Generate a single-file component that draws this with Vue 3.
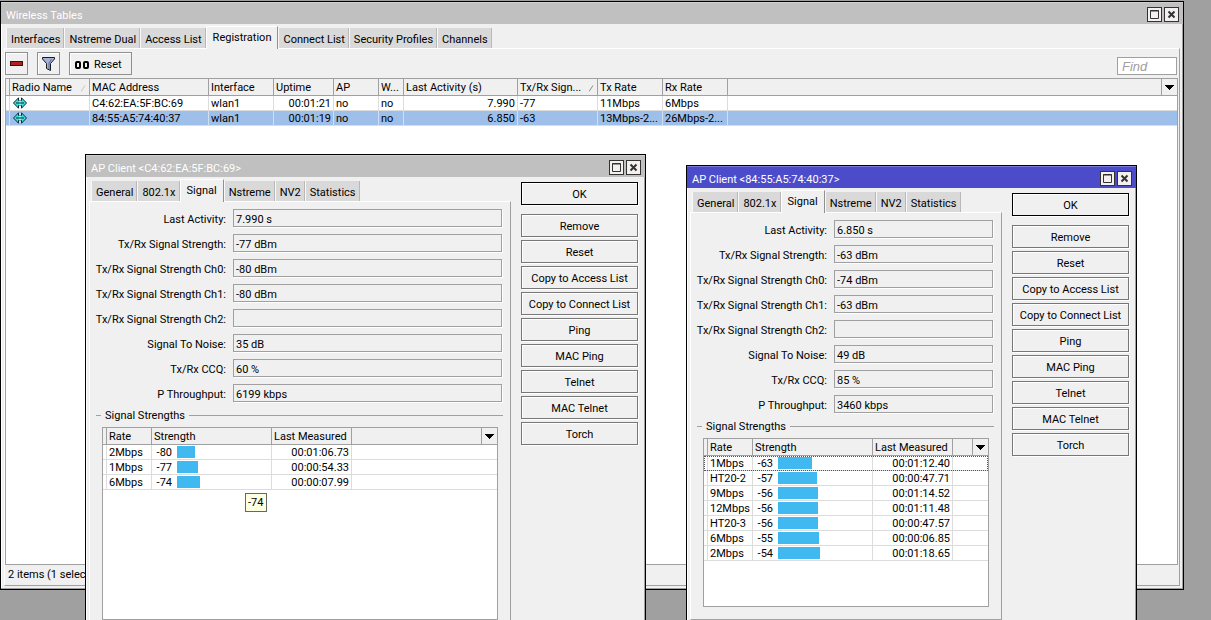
<script setup>
const mainTabs = ['Interfaces', 'Nstreme Dual', 'Access List', 'Registration', 'Connect List', 'Security Profiles', 'Channels']
const clientTabs = ['General', '802.1x', 'Signal', 'Nstreme', 'NV2', 'Statistics']
const actions = ['Remove', 'Reset', 'Copy to Access List', 'Copy to Connect List', 'Ping', 'MAC Ping', 'Telnet', 'MAC Telnet', 'Torch']

const registrations = [
  { mac: 'C4:62:EA:5F:BC:69', iface: 'wlan1', uptime: '00:01:21', ap: 'no', wds: 'no', activity: '7.990', signal: '-77', tx: '11Mbps', rx: '6Mbps', selected: false },
  { mac: '84:55:A5:74:40:37', iface: 'wlan1', uptime: '00:01:19', ap: 'no', wds: 'no', activity: '6.850', signal: '-63', tx: '13Mbps-2...', rx: '26Mbps-2...', selected: true },
]

const fieldNames = [
  'Last Activity:', 'Tx/Rx Signal Strength:', 'Tx/Rx Signal Strength Ch0:', 'Tx/Rx Signal Strength Ch1:',
  'Tx/Rx Signal Strength Ch2:', 'Signal To Noise:', 'Tx/Rx CCQ:', 'P Throughput:',
]

const clients = [
  {
    id: 'first',
    mac: 'C4:62:EA:5F:BC:69',
    active: false,
    tip: '-74',
    values: ['7.990 s', '-77 dBm', '-80 dBm', '-80 dBm', '', '35 dB', '60 %', '6199 kbps'],
    rates: [
      ['2Mbps', -80, '00:01:06.73'],
      ['1Mbps', -77, '00:00:54.33'],
      ['6Mbps', -74, '00:00:07.99'],
    ],
  },
  {
    id: 'second',
    mac: '84:55:A5:74:40:37',
    active: true,
    tip: '',
    values: ['6.850 s', '-63 dBm', '-74 dBm', '-63 dBm', '', '49 dB', '85 %', '3460 kbps'],
    rates: [
      ['1Mbps', -63, '00:01:12.40'],
      ['HT20-2', -57, '00:00:47.71'],
      ['9Mbps', -56, '00:01:14.52'],
      ['12Mbps', -56, '00:01:11.48'],
      ['HT20-3', -56, '00:00:47.57'],
      ['6Mbps', -55, '00:00:06.85'],
      ['2Mbps', -54, '00:01:18.65'],
    ],
  },
]

const barWidth = (dbm) => Math.floor((dbm + 100) * 0.92) + 'px'
</script>

<template>
  <main class="desktop">
    <section class="window main-window">
      <header class="title">
        <span class="title-text">Wireless Tables</span>
        <button class="win-btn" aria-label="Maximize"><svg width="13" height="13" viewBox="0 0 13 13"><path d="M2.5 2.5h8v8h-8z M2 3h9" fill="none" stroke="#333" /></svg></button>
        <button class="win-btn" aria-label="Close"><svg width="13" height="13" viewBox="0 0 13 13"><path d="M3.500 3.500l6 6M9.500 3.500l-6 6" fill="none" stroke="#333" stroke-width="2" /></svg></button>
      </header>
      <nav class="tabs">
        <button v-for="t in mainTabs" :key="t" class="tab" :class="{ current: t === 'Registration' }">{{ t }}</button>
      </nav>
      <div class="panel main-panel">
        <div class="toolbar">
          <button class="tool square" aria-label="Remove"><svg width="13" height="5" viewBox="0 0 13 5" shape-rendering="crispEdges"><path d="M0 0h13v5h-13z" fill="#3a1010" /><path d="M1 1h11v3h-11z" fill="#b02020" /></svg></button>
          <button class="tool square" aria-label="Filter"><svg width="13" height="14" viewBox="0 0 13 14"><path d="M.5 .5h12v1.500l-4 4.500v7l-4-2v-5l-4-4.500z" fill="#a9b2d8" stroke="#1a1a22" /><path d="M9.500 2l-2.500 4v6" fill="none" stroke="#5b668f" /></svg></button>
          <button class="tool reset"><svg width="14" height="8" viewBox="0 0 14 8"><path d="M2 1h2q1 0 1 1v4q0 1-1 1h-2q-1 0-1-1v-4q0-1 1-1zM10 1h2q1 0 1 1v4q0 1-1 1h-2q-1 0-1-1v-4q0-1 1-1z" fill="none" stroke="#000" stroke-width="2" /></svg>Reset</button>
          <input class="find" type="text" placeholder="Find" aria-label="Find" />
        </div>
        <div class="list main-list">
          <table>
            <colgroup>
              <col class="c-edge" /><col class="c80" /><col class="c119" /><col class="c65" /><col class="c60" /><col class="c45" /><col class="c25" />
              <col class="c114" /><col class="c80" /><col class="c65" /><col class="c65" /><col /><col class="c-menu" />
            </colgroup>
            <thead>
              <tr>
                <th></th>
                <th><span class="sortable">Radio Name<svg class="faint" width="6" height="7" viewBox="0 0 6 7"><path d="M0 6.500l4-6" fill="none" stroke="currentColor" /></svg></span></th>
                <th>MAC Address</th><th>Interface</th><th>Uptime</th><th>AP</th><th>W...</th><th>Last Activity (s)</th>
                <th><span class="sortable">Tx/Rx Sign...<svg width="6" height="7" viewBox="0 0 6 7"><path d="M0 6.500l4-6" fill="none" stroke="currentColor" /></svg></span></th>
                <th>Tx Rate</th><th>Rx Rate</th><th></th>
                <th class="menu"><button aria-label="Columns"><svg width="9" height="5" viewBox="0 0 9 5" shape-rendering="crispEdges"><path d="M0 0h9l-4.500 5z" /></svg></button></th>
              </tr>
            </thead>
            <tbody>
              <tr v-for="r in registrations" :key="r.mac" :class="{ selected: r.selected }">
                <td></td>
                <td class="icon"><svg width="14" height="12" viewBox="0 0 14 12"><path d="M5.500 .8v2.700h3v-2.700l5 5.200-5 5.200v-2.700h-3v2.700l-5-5.200z" fill="#35e0e0" stroke="#0c2a30" stroke-linejoin="round" /><path d="M7 1v10" stroke="#f4ffff" /><path d="M3 6h8" stroke="#0c2a30" /></svg></td>
                <td>{{ r.mac }}</td><td>{{ r.iface }}</td><td class="num">{{ r.uptime }}</td><td>{{ r.ap }}</td><td>{{ r.wds }}</td>
                <td class="num">{{ r.activity }}</td><td>{{ r.signal }}</td><td>{{ r.tx }}</td><td>{{ r.rx }}</td><td colspan="2" class="rest"></td>
              </tr>
            </tbody>
          </table>
        </div>
        <footer class="status">2 items (1 selected)</footer>
      </div>
    </section>

    <section v-for="c in clients" :key="c.id" class="window client" :class="[c.id, { active: c.active }]">
      <header class="title">
        <span class="title-text">AP Client &lt;{{ c.mac }}&gt;</span>
        <button class="win-btn" aria-label="Maximize"><svg width="13" height="13" viewBox="0 0 13 13"><path d="M2.500 2.500h8v8h-8z M2 3h9" fill="none" stroke="#333" /></svg></button>
        <button class="win-btn" aria-label="Close"><svg width="13" height="13" viewBox="0 0 13 13"><path d="M3.500 3.500l6 6M9.500 3.500l-6 6" fill="none" stroke="#333" stroke-width="2" /></svg></button>
      </header>
      <div class="client-body">
        <div class="client-main">
          <nav class="tabs">
            <button v-for="t in clientTabs" :key="t" class="tab" :class="{ current: t === 'Signal' }">{{ t }}</button>
          </nav>
          <div class="panel client-panel">
            <div v-for="(f, i) in fieldNames" :key="f" class="field">
              <label :for="c.id + i">{{ f }}</label>
              <input :id="c.id + i" type="text" readonly :value="c.values[i]" />
            </div>
            <h2 class="group">Signal Strengths</h2>
            <div class="list rate-list">
              <table>
                <colgroup><col class="c-edge" /><col class="c45" /><col class="c120" /><col class="c80" /><col /><col class="c-menu" /></colgroup>
                <thead>
                  <tr>
                    <th></th><th>Rate</th><th>Strength</th><th>Last Measured</th><th></th>
                    <th class="menu"><button aria-label="Columns"><svg width="9" height="5" viewBox="0 0 9 5" shape-rendering="crispEdges"><path d="M0 0h9l-4.500 5z" /></svg></button></th>
                  </tr>
                </thead>
                <tbody>
                  <tr v-for="(r, i) in c.rates" :key="r[0]" :class="{ focused: c.active && i === 0 }">
                    <td></td><td>{{ r[0] }}</td>
                    <td class="level"><span class="strength"><span class="dbm">{{ r[1] }}</span><span class="bar" :style="{ width: barWidth(r[1]) }"></span></span></td>
                    <td class="num">{{ r[2] }}</td><td colspan="2" class="rest"></td>
                  </tr>
                </tbody>
              </table>
            </div>
          </div>
        </div>
        <div class="actions">
          <button class="action ok">OK</button>
          <button v-for="a in actions" :key="a" class="action">{{ a }}</button>
        </div>
      </div>
      <div v-if="c.tip" class="tip" role="tooltip">{{ c.tip }}</div>
    </section>
  </main>
</template>

<style>
body {
  margin: 0;
}
</style>

<style scoped>
* {
  box-sizing: border-box;
}
.desktop {
  position: relative;
  height: 100vh;
  overflow: hidden;
  background: #a0a0a0;
  color: #000;
  font: 11px/14px Roboto, "Liberation Sans", Arial, sans-serif;
}
button,
input {
  font: inherit;
  color: inherit;
  margin: 0;
  padding: 0;
  border-radius: 0;
  outline: none;
}
svg {
  display: block;
  flex: none;
}
.window {
  position: absolute;
  background: #f0f0f0;
  border: 1px solid #000;
  box-shadow: inset -1px -1px #a0a0a0, inset 1px 1px #fff;
}
.main-window {
  top: 1px;
  left: 0;
  right: 27px;
  bottom: 30px;
  display: flex;
  flex-direction: column;
  padding-bottom: 3px;
}
.client.first {
  top: 154px;
  left: 85px;
  width: 561px;
}
.client.second {
  top: 165px;
  left: 686px;
  width: 451px;
}
.title {
  display: flex;
  align-items: center;
  gap: 2px;
  height: 22px;
  flex: none;
  padding: 2px 4px 0 5px;
  background: #c0c0c0;
  color: #fff;
  border-top: 1px solid #d0d0d0;
}
.active .title {
  background: #4c4ccb;
  border-top-color: #7a7ad8;
}
.title-text {
  flex: 1;
  padding-top: 2px;
}
.win-btn {
  width: 15px;
  height: 15px;
  border: 1px solid #333;
  background: #f4f0f0;
}
.tabs {
  display: flex;
  align-items: flex-end;
  height: 24px;
  flex: none;
  padding-left: 5px;
}
.tab {
  height: 20px;
  padding: 3px 3px 0 4px;
  border: 0;
  border-left: 1px solid #f8f8f8;
  border-right: 1px solid #b8b8b8;
  background: #d9d9d9;
  white-space: nowrap;
}
.tab.current {
  position: relative;
  height: 23px;
  margin-bottom: -1px;
  padding: 0 6px;
  border-top: 1px solid #fff;
  border-left-color: #fff;
  border-right-color: #909090;
  background: #f0f0f0;
}
.panel {
  border: 1px solid #a0a0a0;
  border-top-color: #fff;
  border-left-color: #fff;
}
.main-panel {
  flex: 1;
  min-height: 0;
  display: flex;
  flex-direction: column;
  margin: 0 3px;
  padding: 3px 1px 0 0;
}
.toolbar {
  display: flex;
  gap: 9px;
  margin-bottom: 3px;
}
.tool {
  display: flex;
  align-items: center;
  justify-content: center;
  height: 23px;
  border: 1px solid #909090;
  background: #f0f0f0;
  box-shadow: inset 1px 1px #fff;
}
.square {
  width: 23px;
}
.reset {
  width: 63px;
  gap: 5px;
  justify-content: flex-start;
  padding: 2px 0 0 5px;
}
.find {
  width: 60px;
  height: 18px;
  margin: 5px 1px 0 auto;
  padding: 1px 4px 0;
  border: 1px solid #a0a0a0;
  background: #fff;
  font: 13px/15px "Liberation Sans", Arial, sans-serif;
}
.find::placeholder {
  color: #a0a0a0;
  font-style: italic;
  opacity: 1;
}
.list {
  border: 1px solid #a0a0a0;
  background: #fff;
}
.main-list {
  flex: 1;
  min-height: 0;
}
table {
  width: 100%;
  table-layout: fixed;
  border-collapse: separate;
  border-spacing: 0;
}
.c-edge { width: 4px; }
.c-menu { width: 15px; }
.c25 { width: 25px; }
.c45 { width: 45px; }
.c60 { width: 60px; }
.c65 { width: 65px; }
.c80 { width: 80px; }
.c114 { width: 114px; }
.c119 { width: 119px; }
.c120 { width: 120px; }
th,
td {
  padding: 2px 2px 0;
  text-align: left;
  font-weight: normal;
  white-space: nowrap;
  overflow: hidden;
}
th {
  height: 17px;
  line-height: 14px;
  background: #f0f0f0;
  border-right: 1px solid #a0a0a0;
  border-bottom: 1px solid #a0a0a0;
}
th.menu {
  padding: 0;
  border-right: 0;
}
.menu button {
  display: flex;
  align-items: center;
  justify-content: center;
  width: 100%;
  height: 16px;
  border: 0;
  background: none;
}
td {
  height: 15px;
  line-height: 12px;
  border-right: 1px solid #dcdcdc;
  border-bottom: 1px solid #dcdcdc;
}
td.num {
  text-align: right;
}
td.rest {
  border-right: 0;
}
td.icon {
  padding: 1px 3px;
}
td.level {
  padding-top: 1px;
}
.selected td {
  background: #9dbfe9;
  border-color: #cfdff4;
}
.focused {
  outline: 1px dotted #555;
  outline-offset: -1px;
}
.sortable {
  display: flex;
  justify-content: space-between;
  align-items: center;
  color: inherit;
}
.sortable svg {
  color: #888;
}
.sortable .faint {
  color: #c4c4c4;
}
.status {
  height: 20px;
  padding: 3px 3px 0;
  flex: none;
}
.client-body {
  display: flex;
  gap: 10px;
  padding: 0 7px 8px 0;
}
.client-main {
  flex: 1;
  min-width: 0;
}
.client-panel {
  margin-left: 3px;
  padding: 7px 0 12px;
}
.field {
  display: flex;
  align-items: center;
  gap: 7px;
  margin-bottom: 7px;
  padding-right: 8px;
}
.field label {
  width: 136px;
  padding-top: 4px;
  text-align: right;
  white-space: nowrap;
}
.field input {
  flex: 1;
  min-width: 0;
  height: 18px;
  padding: 2px 2px 0;
  border: 1px solid #a0a0a0;
  background: #f0f0f0;
  box-shadow: 1px 1px #fff;
}
.group {
  display: flex;
  align-items: center;
  gap: 4px;
  margin: -1px 7px 4px 6px;
  font: inherit;
  line-height: 15px;
}
.group::before,
.group::after {
  content: "";
  width: 5px;
  height: 1px;
  background: #a0a0a0;
}
.group::after {
  flex: 1;
}
.rate-list {
  height: 193px;
  margin: 0 12px;
}
.second .rate-list {
  height: 169px;
}
.strength {
  display: flex;
  align-items: flex-start;
  gap: 5px;
}
.dbm {
  width: 18px;
  padding-top: 1px;
  text-align: right;
}
.bar {
  height: 12px;
  background: #3fb9ef;
}
.actions {
  width: 117px;
  padding-top: 5px;
  display: flex;
  flex-direction: column;
  gap: 3px;
}
.action {
  height: 23px;
  padding-top: 3px;
  border: 1px solid #777;
  background: #f0f0f0;
  box-shadow: inset 1px 1px #fff, 1px 1px #fff;
}
.ok {
  border-color: #000;
  margin-bottom: 6px;
}
.tip {
  position: absolute;
  left: 159px;
  top: 338px;
  padding: 2px 3px 1px 2px;
  border: 1px solid #666;
  background: #ffffe1;
}
</style>
